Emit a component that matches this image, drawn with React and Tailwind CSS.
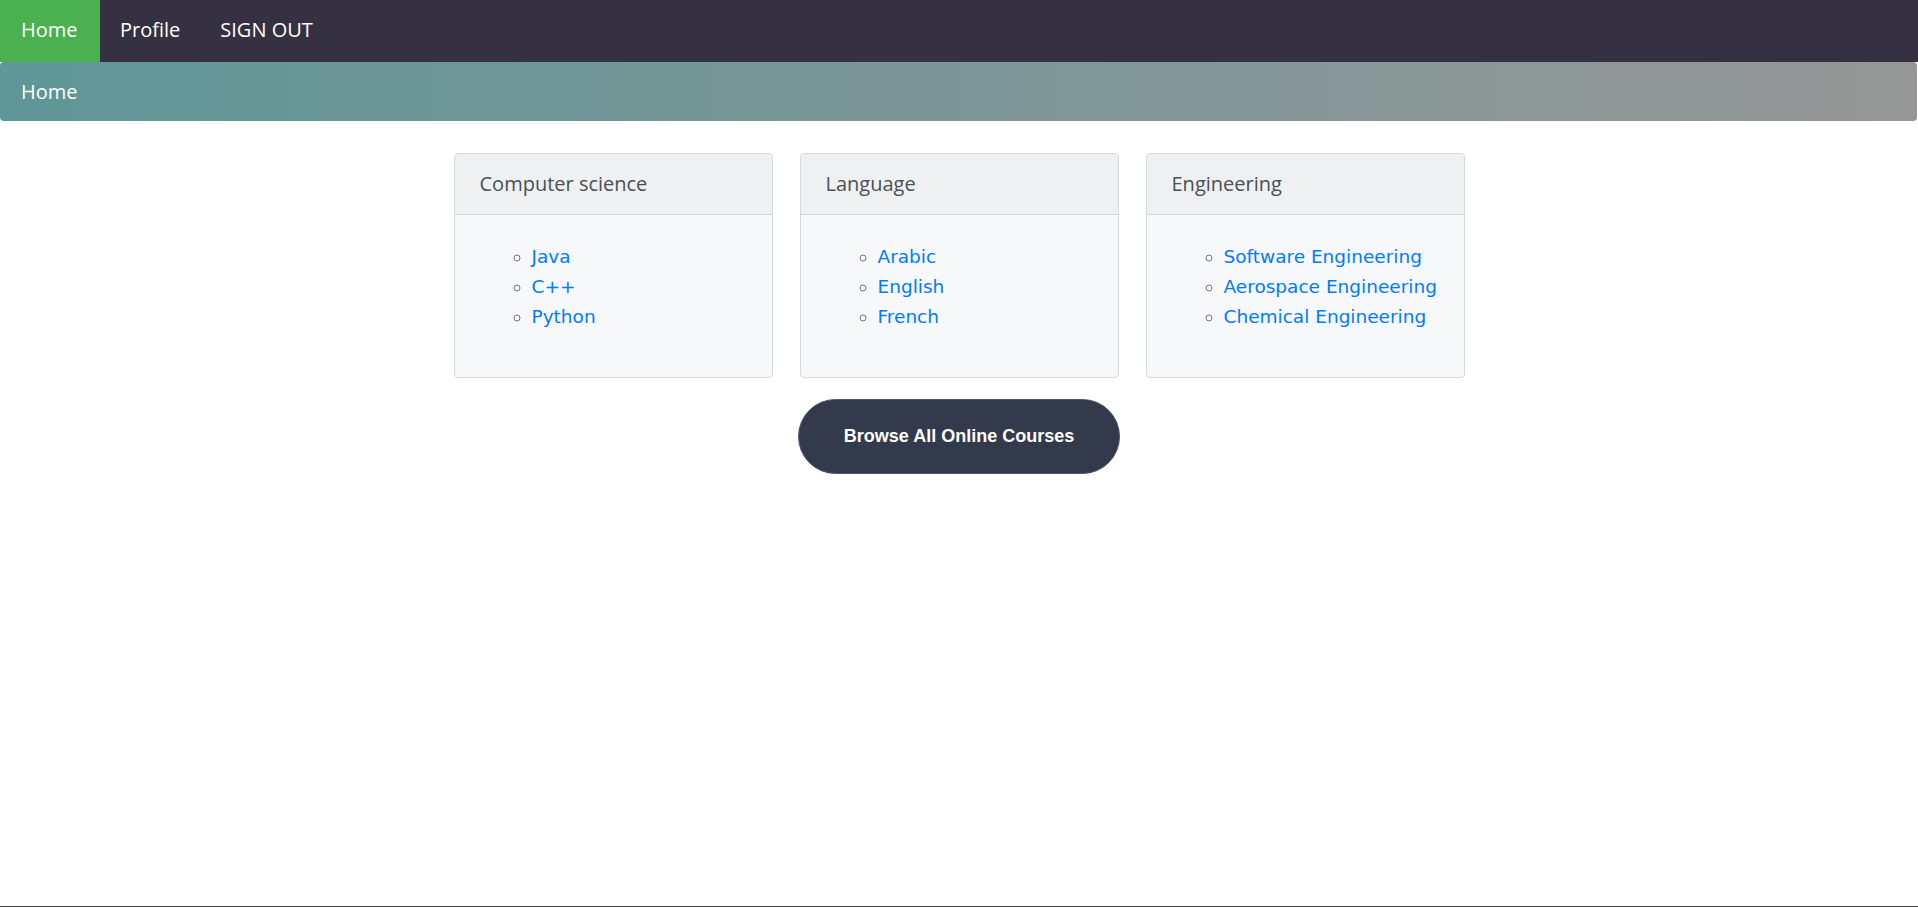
const categories = [
  { title: 'Computer science', items: ['Java', 'C++', 'Python'] },
  { title: 'Language', items: ['Arabic', 'English', 'French'] },
  { title: 'Engineering', items: ['Software Engineering', 'Aerospace Engineering', 'Chemical Engineering'] },
];

const CategoryCard = ({ title, items }) => (
  <div className="w-[319px] h-[225px] border border-[#d6d8db] rounded-[4px] bg-[#f7f8fa] overflow-hidden">
    <div className="h-[61px] flex items-center px-[25px] bg-[#eff0f2] border-b border-[#d3d5d8] text-[20px] text-[#495057]">
      {title}
    </div>
    <ul className="pt-[27px] pl-[77px] list-[circle] marker:text-[#6c757d] font-['Comic_Sans_MS','DejaVu_Sans',cursive] text-[18.5px] leading-[30px]">
      {items.map((item) => (
        <li key={item}>
          <a href="#" className="text-[#007bff]">{item}</a>
        </li>
      ))}
    </ul>
  </div>
);

export default function App() {
  return (
    <div className="h-[907px] border-b border-[#444] bg-white font-['Open_Sans','Noto_Sans',sans-serif]">
      {/* Top nav */}
      <nav className="h-[62px] flex bg-[#363142] text-white text-[20px]">
        <a href="#" className="w-[100px] pl-[21px] pb-[2px] flex items-center bg-[#4bb050]">Home</a>
        <a href="#" className="px-[20px] pb-[2px] flex items-center">Profile</a>
        <a href="#" className="px-[20px] pb-[2px] flex items-center">SIGN OUT</a>
      </nav>

      {/* Breadcrumb */}
      <div className="h-[59px] mr-px flex items-center px-[21px] rounded-[4px] bg-gradient-to-r from-[#5f9697] to-[#969696] text-white text-[20px]">
        Home
      </div>

      {/* Categories */}
      <div className="flex justify-center gap-[27px] mt-[32px]">
        {categories.map((c) => (
          <CategoryCard key={c.title} {...c} />
        ))}
      </div>

      <div className="flex justify-center mt-[21px]">
        <button className="w-[322px] h-[75px] rounded-full bg-[#323a4b] border border-[#4d5474] text-white font-bold text-[18px] font-['Liberation_Sans',sans-serif]">
          Browse All Online Courses
        </button>
      </div>
    </div>
  );
}
